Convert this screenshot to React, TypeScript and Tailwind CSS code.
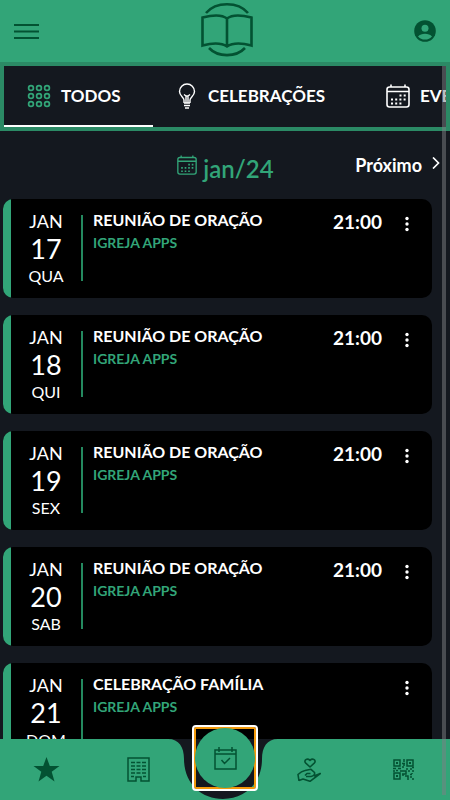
import React from "react";

const events = [
  { day: "17", week: "QUA", title: "REUNIÃO DE ORAÇÃO", time: "21:00" },
  { day: "18", week: "QUI", title: "REUNIÃO DE ORAÇÃO", time: "21:00" },
  { day: "19", week: "SEX", title: "REUNIÃO DE ORAÇÃO", time: "21:00" },
  { day: "20", week: "SAB", title: "REUNIÃO DE ORAÇÃO", time: "21:00" },
  { day: "21", week: "DOM", title: "CELEBRAÇÃO FAMÍLIA", time: "" },
];

function Logo() {
  return (
    <svg className="h-[56px] w-[54px]" viewBox="0 0 54 56" fill="none" stroke="#035232" strokeWidth="2.600" role="img" aria-label="Igreja Apps">
      <path d="M6 12C16 0.300 38 0.300 48 12M9 47C18 56.500 36 56.500 45 47" />
      <path d="M27 17.500C22 13.500 14 13.500 2.500 16.500V44.500C14 41.500 21 41.500 27 45.500C33 41.500 40 41.500 51.500 44.500V16.500C40 13.500 32 13.500 27 17.500V45" />
    </svg>
  );
}

function GridIcon() {
  return (
    <svg className="size-6" viewBox="0 0 24 24" fill="none" stroke="#32a578" strokeWidth="1.700" aria-hidden="true">
      {[4, 12, 20].map((y) => [4, 12, 20].map((x) => <circle key={x + "-" + y} cx={x} cy={y} r="2.400" />))}
    </svg>
  );
}

function BulbIcon() {
  return (
    <svg className="h-[26px] w-[18px]" viewBox="0 0 18 26" fill="none" stroke="#fff" strokeWidth="1.400" aria-hidden="true">
      <path d="M6 20V17C6 14.500 1.500 13 1.500 8.500A7.500 7.500 0 0 1 16.500 8.500C16.500 13 12 14.500 12 17V20M6 20H12M6 22.500H12M7 25H11M8 20V13L6 11.500M10 20V13L12 11.500M8 13H10" />
    </svg>
  );
}

function CalendarDots({ className }: { className: string }) {
  return (
    <svg className={className} viewBox="0 0 24 24" fill="none" stroke="currentColor" strokeWidth="1.600" aria-hidden="true">
      <rect x="1" y="3" width="22" height="20" rx="2.500" />
      <path d="M1 7.500H23M5 0.500V3M19 0.500V3" />
      <path d="M13.500 11.500H20.500M5 15.500H20.500M5 19.500H16.500" strokeWidth="2" strokeDasharray="2 2.200" />
    </svg>
  );
}

function BuildingIcon() {
  return (
    <svg className="h-[25px] w-[23px]" viewBox="0 0 23 25" fill="none" stroke="#035232" strokeWidth="1.500" aria-hidden="true">
      <path d="M1 1H22V24H14V20H9V24H1Z" />
      <path d="M4 5.500H8M9.500 5.500H13.500M15 5.500H19M4 9H8M9.500 9H13.500M15 9H19M4 12.500H8M9.500 12.500H13.500M15 12.500H19M4 16H8M9.500 16H13.500M15 16H19M4 19.500H7M16 19.500H19" />
    </svg>
  );
}

function HandIcon() {
  return (
    <svg className="size-6" viewBox="0 0 24 24" fill="none" stroke="#035232" strokeWidth="1.600" strokeLinejoin="round" aria-hidden="true">
      <path d="M13 9L8.500 4.800C6.500 2.500 10 -0.500 13 2.300C16 -0.500 19.500 2.500 17.500 4.800Z" />
      <path d="M2 23L1 16.500C3 14.500 5 13 8 12.500L14 11.300L17.500 14.500C18 16.500 17 18 14 18.500H9M8 17.500L10 15.500H13.500M17 18L23.300 15.500L13 23.300L6 21L2 22.500" />
    </svg>
  );
}

function QrIcon() {
  return (
    <svg className="size-[21px]" viewBox="0 0 21 21" fill="none" stroke="#035232" strokeWidth="1.500" aria-hidden="true">
      <path d="M1 1H7V7H1ZM14 1H20V7H14ZM1 14H7V20H1Z" />
      <path d="M3 4H5M16 4H18M3 17H5" strokeWidth="2" />
      <path d="M11 0V3M9 4.500H12M11 5V7M9 8H11M0 9.500H3M3 11.500H5M5 9.500H8M0 12H2M7 12H13V15H9M13 10H15M15 12H17M17 10H19M19 12H21M19 8.500H21M10 15V17M12 17H15V21M17 15.500H19M17 18H19M19 20H21M19 15V14" />
    </svg>
  );
}

function EventCard({ day, week, title, time }: { day: string; week: string; title: string; time: string }) {
  return (
    <article className="flex h-[99px] shrink-0 overflow-hidden rounded-[10px] bg-black text-white">
      <div className="w-2 bg-[#32a578]" />
      <div className="flex w-[70px] flex-col items-center pt-3">
        <span className="text-[18px] leading-[21px]">JAN</span>
        <span className="text-[27px] leading-[33px]">{day}</span>
        <span className="text-[16px] leading-[21px]">{week}</span>
      </div>
      <div className="mt-4 h-[66px] w-[2px] bg-[#24895f]" />
      <div className="flex min-w-0 flex-1 flex-col pt-[11px] pl-[10px]">
        <h2 className="text-[16px] leading-[19px] font-bold whitespace-nowrap">{title}</h2>
        <p className="mt-1 text-[14px] leading-[19px] font-bold text-[#32a578]">IGREJA APPS</p>
      </div>
      <time className="pt-3 text-[19px] leading-[21px] font-bold">{time}</time>
      <button type="button" aria-label="Opções" className="mt-3 flex h-[25px] w-[50px] items-center justify-center">
        <svg className="h-4 w-1" viewBox="0 0 4 16" fill="#fff" aria-hidden="true">
          <circle cx="2" cy="2.500" r="1.700" />
          <circle cx="2" cy="8" r="1.700" />
          <circle cx="2" cy="13.500" r="1.700" />
        </svg>
      </button>
    </article>
  );
}

export default function App() {
  return (
    <div className="relative flex h-screen flex-col overflow-hidden bg-[#14181f] font-['Lato','Noto_Sans',sans-serif]">
      <header className="grid h-[62px] shrink-0 grid-cols-[1fr_auto_1fr] items-center bg-[#32a578] px-[14px]">
        <button type="button" aria-label="Menu" className="w-[25px]">
          <svg className="h-[15px] w-[25px]" viewBox="0 0 25 15" stroke="#035232" strokeWidth="1.800" aria-hidden="true">
            <path d="M0 1H25M0 7.500H25M0 14H25" />
          </svg>
        </button>
        <div className="pb-1 pl-[3px]">
          <Logo />
        </div>
        <button type="button" aria-label="Conta" className="justify-self-end">
          <svg className="size-[22px]" viewBox="0 0 22 22" aria-hidden="true">
            <circle cx="11" cy="11" r="10.800" fill="#035232" />
            <circle cx="11" cy="8.300" r="3.500" fill="#32a578" />
            <path d="M4 16.500C7 12.800 15 12.800 18 16.500C15 20.600 7 20.600 4 16.500Z" fill="#32a578" />
          </svg>
        </button>
      </header>

      <nav aria-label="Categorias" className="flex h-[69px] shrink-0 overflow-hidden border-4 border-[#2b8a65] text-[17px] font-bold text-white">
        <button type="button" className="flex w-[149px] shrink-0 items-center gap-[10px] border-b-2 border-white pl-[23px]">
          <GridIcon />
          TODOS
        </button>
        <button type="button" className="flex w-[208px] shrink-0 items-center gap-3 border-b-2 border-transparent pl-[25px]">
          <BulbIcon />
          CELEBRAÇÕES
        </button>
        <button type="button" className="flex shrink-0 items-center gap-[10px] border-b-2 border-transparent pl-[25px]">
          <CalendarDots className="size-6" />
          EVENTOS
        </button>
      </nav>

      <main className="flex min-h-0 flex-1 flex-col overflow-hidden pr-[18px] pl-[3px]">
        <div className="grid h-[68px] shrink-0 grid-cols-[1fr_auto_1fr] items-center">
          <h1 className="col-start-2 flex items-center gap-[6px] pt-2 pl-[16px] text-[24px] leading-[30px] font-semibold text-[#32a578]">
            <CalendarDots className="mb-2 size-5" />
            jan/24
          </h1>
          <button type="button" className="-mr-2 flex items-center justify-self-end gap-[10px] text-[18px] font-bold text-white">
            Próximo
            <svg className="mb-1 h-3 w-2" viewBox="0 0 8 12" fill="none" stroke="#fff" strokeWidth="1.700" aria-hidden="true">
              <path d="M1 0.500L6.500 6L1 11.500" />
            </svg>
          </button>
        </div>
        <div className="flex flex-col gap-[17px]">
          {events.map((event) => (
            <EventCard key={event.day} {...event} />
          ))}
        </div>
      </main>

      <nav aria-label="Principal" className="relative flex h-[61px] shrink-0">
        <div className="flex flex-1 items-center justify-between bg-[#32a578] pr-[14px] pl-[33px]">
          <button type="button" aria-label="Destaques">
            <svg className="h-[25px] w-[27px]" viewBox="0 0 27 25" fill="#035232" aria-hidden="true">
              <path d="M13.500 0L16.800 9H26.500L18.700 14.800L21.500 24.500L13.500 18.800L5.500 24.500L8.300 14.800L0.500 9H10.200Z" />
            </svg>
          </button>
          <button type="button" aria-label="Igreja">
            <BuildingIcon />
          </button>
        </div>
        <svg className="h-[61px] w-[118px]" viewBox="0 0 118 61" fill="#32a578" aria-hidden="true">
          <path d="M0 0H4C15 0 20 8 20 20C20 44 37 60 59 60C81 60 98 44 98 20C98 8 103 0 114 0H118V61H0Z" />
        </svg>
        <div className="flex flex-1 items-center justify-between bg-[#32a578] pr-9 pl-[15px]">
          <button type="button" aria-label="Doações">
            <HandIcon />
          </button>
          <button type="button" aria-label="Código QR">
            <QrIcon />
          </button>
        </div>
        <button type="button" aria-label="Agenda" className="absolute bottom-[9px] left-1/2 flex size-[66px] -translate-x-1/2 items-center justify-center rounded-[4px] border-2 border-white p-0 ring-2 ring-[#f29a0c] ring-inset">
          <span className="flex size-[60px] shrink-0 items-center justify-center rounded-full bg-[#32a578]">
            <svg className="size-[23px]" viewBox="0 0 23 23" fill="none" stroke="#035232" strokeWidth="1.500" aria-hidden="true">
              <path d="M1 3H22V22H1ZM1 7H22M5 0V5M18 0V5M7.500 13L10.500 16.500L16 11" />
            </svg>
          </span>
        </button>
      </nav>
      <div className="absolute top-[66px] right-1 bottom-[5px] w-1 bg-[#7d7f83]/50" />
    </div>
  );
}
